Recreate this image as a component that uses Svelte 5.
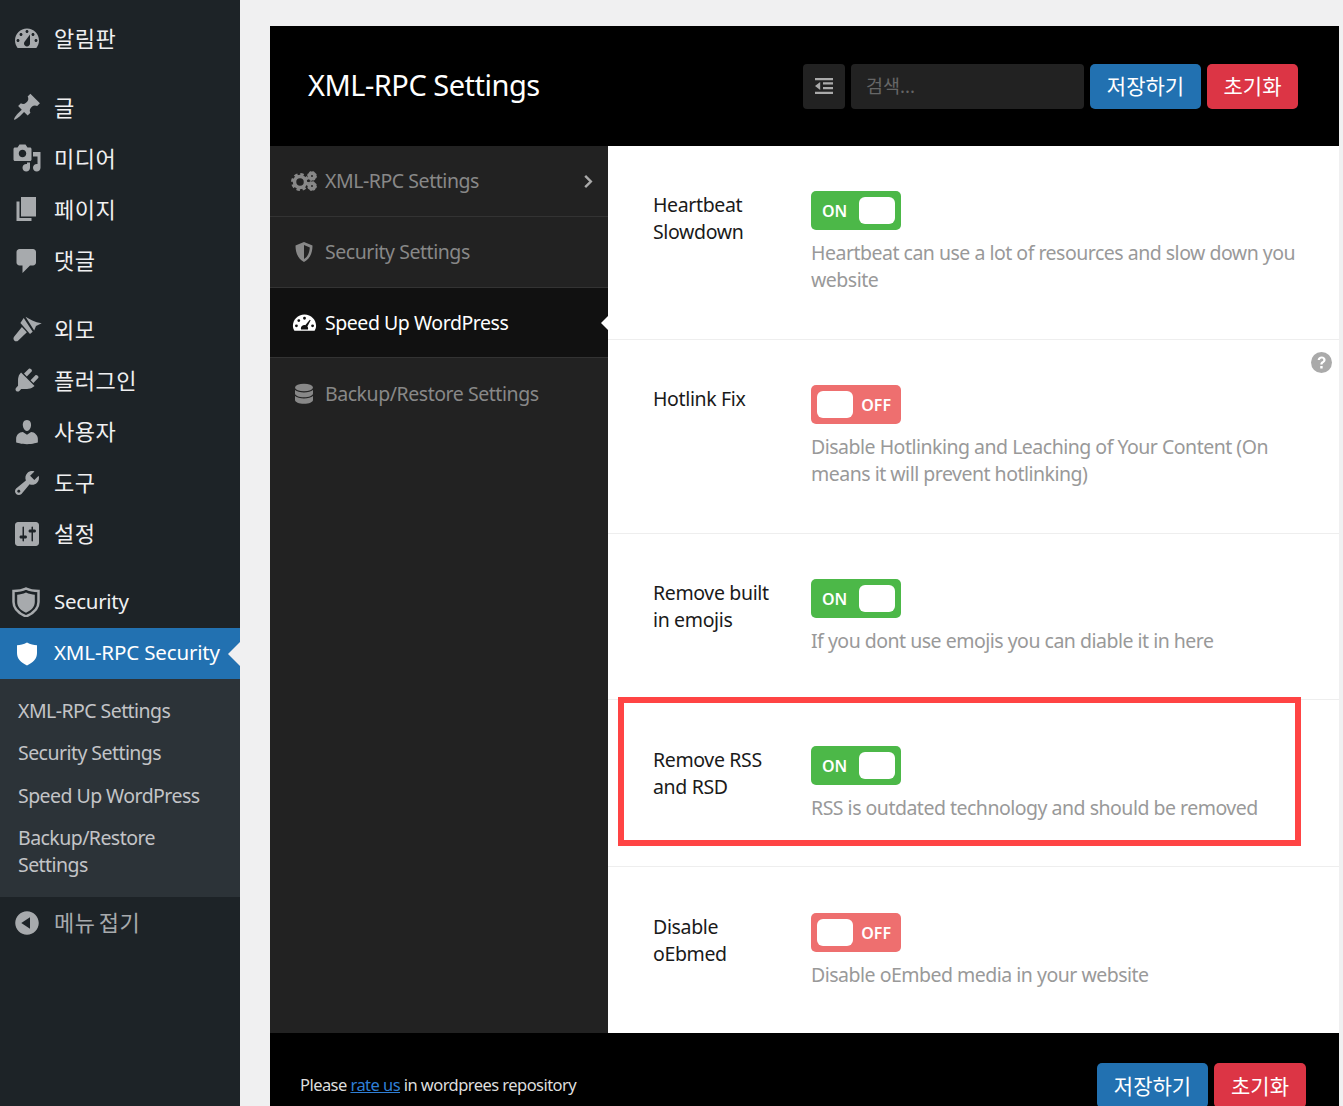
<script>
  const dash = {
    dashboard: "M3.76 16h12.48c1.1-1.37 1.76-3.11 1.76-5 0-4.42-3.58-8-8-8s-8 3.58-8 8c0 1.89.66 3.63 1.76 5zM10 4c.55 0 1 .45 1 1s-.45 1-1 1-1-.45-1-1 .45-1 1-1zM6 6c.55 0 1 .45 1 1s-.45 1-1 1-1-.45-1-1 .45-1 1-1zm8 0c.55 0 1 .45 1 1s-.45 1-1 1-1-.45-1-1 .45-1 1-1zm-5.37 5.55L12 7v6c0 1.1-.9 2-2 2s-2-.9-2-2c0-.57.24-1.08.63-1.45zM4 10c.55 0 1 .45 1 1s-.45 1-1 1-1-.45-1-1 .45-1 1-1zm12 0c.55 0 1 .45 1 1s-.45 1-1 1-1-.45-1-1 .45-1 1-1z",
    post: "M10.44 3.02l1.82-1.82 6.36 6.35-1.83 1.82c-1.05-.68-2.48-.57-3.41.36l-.75.75c-.92.93-1.04 2.35-.35 3.41l-1.83 1.82-2.41-2.41-2.8 2.79c-.42.42-3.38 2.71-3.8 2.29s1.86-3.39 2.28-3.81l2.79-2.79L4.1 9.36l1.83-1.82c1.05.69 2.48.57 3.4-.36l.75-.75c.93-.92 1.05-2.35.36-3.41z",
    media: "M13 11V4c0-.55-.45-1-1-1h-1.67L9 1H5L3.67 3H2c-.55 0-1 .45-1 1v7c0 .55.45 1 1 1h10c.55 0 1-.45 1-1zM7 4.5c1.38 0 2.5 1.12 2.5 2.5S8.38 9.5 7 9.5 4.5 8.38 4.5 7 5.62 4.5 7 4.5zM14 6h5v10.5c0 1.38-1.12 2.5-2.5 2.5S14 17.88 14 16.5s1.12-2.5 2.5-2.5c.17 0 .34.02.5.05V9h-3V6zm-4 8.05V13h2v3.5c0 1.38-1.12 2.5-2.5 2.5S7 17.88 7 16.5 8.12 14 9.5 14c.17 0 .34.02.5.05z",
    page: "M6 15V2h10v13H6zm-1 1h8v2H3V5h2v11z",
    comments: "M5 2h9c1.1 0 2 .9 2 2v7c0 1.1-.9 2-2 2h-2l-5 5v-5H5c-1.1 0-2-.9-2-2V4c0-1.1.9-2 2-2z",
    appearance: "M9 1.800C11.500 3.400 15 5.400 19.800 6.200L16 8 14.800 11zM7.800 2.600l6 9.200-1.800 1.600-6.400-7.400zM6.600 8.600l3.300 3.600-5.700 5.400c-.8.800-2 .800-2.700 0-.7-.7-.7-1.800 0-2.600z",
    plugins: "M13.11 4.36L9.87 7.6 8 5.73l3.24-3.24c.35-.34 1.05-.2 1.56.32.52.51.66 1.21.31 1.55zm-8 1.77l.91-1.12 9.01 9.01-1.19.84c-.71.71-2.63 1.16-3.82 1.16H6.14L4.9 17.26c-.59.59-1.54.59-2.12 0-.59-.58-.59-1.53 0-2.12l1.24-1.24v-3.88c0-1.13.4-3.19 1.09-3.89zm7.26 3.97l3.24-3.24c.34-.35 1.04-.21 1.55.31.52.51.66 1.21.31 1.55l-3.24 3.25z",
    users: "M10 9.25c-2.27 0-2.73-3.44-2.73-3.44C7 4.02 7.82 2 9.97 2c2.16 0 2.98 2.02 2.71 3.81 0 0-.41 3.44-2.68 3.44zm0 2.57L12.72 10c2.39 0 4.52 2.33 4.52 4.53v2.49s-3.65 1.13-7.24 1.13c-3.65 0-7.24-1.13-7.24-1.13v-2.49c0-2.25 1.94-4.48 4.47-4.48z",
    tools: "M16.68 9.77c-1.34 1.34-3.3 1.67-4.95.99l-5.41 6.52c-.99.99-2.59.99-3.58 0s-.99-2.59 0-3.57l6.52-5.42c-.68-1.65-.35-3.61.99-4.95 1.28-1.28 3.12-1.62 4.72-1.06l-2.89 2.89 2.82 2.82 2.86-2.87c.53 1.58.18 3.39-1.08 4.65zM3.81 16.21c.4.39 1.04.39 1.43 0 .4-.4.4-1.04 0-1.43-.39-.4-1.03-.4-1.43 0-.39.39-.39 1.03 0 1.43z",
    settings: "M18 16V4c0-1.1-.9-2-2-2H4c-1.1 0-2 .9-2 2v12c0 1.1.9 2 2 2h12c1.1 0 2-.9 2-2zM8 11h1c.55 0 1 .45 1 1s-.45 1-1 1H8v1.5c0 .28-.22.5-.5.5s-.5-.22-.5-.5V13H6c-.55 0-1-.45-1-1s.45-1 1-1h1V5.5c0-.28.22-.5.5-.5s.5.22.5.5V11zm5-2h-1c-.55 0-1-.45-1-1s.45-1 1-1h1V5.5c0-.28.22-.5.5-.5s.5.22.5.5V7h1c.55 0 1 .45 1 1s-.45 1-1 1h-1v5.5c0 .28-.22.5-.5.5s-.5-.22-.5-.5V9z",
    collapse: "M10 2.16c4.33 0 7.84 3.51 7.84 7.84s-3.51 7.84-7.84 7.84S2.16 14.33 2.16 10 5.71 2.16 10 2.16zm2 11.72V6.12L6.18 9.97z"
  };
  const groups = [
    [["dashboard", "알림판"]],
    [["post", "글"], ["media", "미디어"], ["page", "페이지"], ["comments", "댓글"]],
    [["appearance", "외모"], ["plugins", "플러그인"], ["users", "사용자"], ["tools", "도구"], ["settings", "설정"]]
  ];
  const subs = ["XML-RPC Settings", "Security Settings", "Speed Up WordPress", "Backup/Restore Settings"];
  const rows = [
    { label: "Heartbeat Slowdown", on: true, desc: "Heartbeat can use a lot of resources and slow down you website", h: "tall" },
    { label: "Hotlink Fix", on: false, desc: "Disable Hotlinking and Leaching of Your Content (On means it will prevent hotlinking)", h: "tall", help: true },
    { label: "Remove built in emojis", on: true, desc: "If you dont use emojis you can diable it in here", h: "short" },
    { label: "Remove RSS and RSD", on: true, desc: "RSS is outdated technology and should be removed", h: "wide", mark: true },
    { label: "Disable oEbmed", on: false, desc: "Disable oEmbed media in your website", h: "last" }
  ];
  const nav = [
    { icon: "cogs", text: "XML-RPC Settings", chevron: true },
    { icon: "shield", text: "Security Settings" },
    { icon: "gauge", text: "Speed Up WordPress", active: true },
    { icon: "db", text: "Backup/Restore Settings" }
  ];
</script>

<div class="page">
  <aside class="side">
    {#each groups as group}
      <ul class="group">
        {#each group as [icon, text]}
          <li class="item">
            <svg class="wp" viewBox="0 0 20 20"><path fill-rule="evenodd" d={dash[icon]} /></svg>
            <span class="ko">{text}</span>
          </li>
        {/each}
      </ul>
    {/each}
    <ul class="group">
      <li class="item">
        <svg class="wp" viewBox="0 0 30 30">
          <path class="sh-o" d="M14 1.500C18 3.500 23 4 26.500 4v11c0 7-5.500 11.500-12.500 14.500C7 26.500 1.500 22 1.500 15V4C5 4 10 3.500 14 1.500z" />
          <path class="sh-i" d="M14 5.500c3 1.500 6.200 2 8.800 2.200v7.300c0 5-3.800 8.500-8.800 10.700-5-2.200-8.800-5.700-8.800-10.700V7.700C7.800 7.500 11 7 14 5.500z" />
        </svg>
        <span>Security</span>
      </li>
      <li class="item current">
        <svg class="wp" viewBox="0 0 30 30">
          <path class="sh-w" d="M15 3.500c3.400 1.800 6.800 2.600 10 2.700v7.800c0 5.700-3.800 9.400-10 12.400C8.800 23.400 5 19.700 5 14V6.200C8.200 6.100 11.600 5.300 15 3.500z" />
        </svg>
        <span class="tight">XML-RPC Security</span>
      </li>
      <li class="submenu">
        {#each subs as s}<div class="subitem">{s}</div>{/each}
      </li>
    </ul>
    <div class="item collapse">
      <svg class="wp" viewBox="0 0 20 20"><path fill-rule="evenodd" d={dash.collapse} /></svg>
      <span class="ko">메뉴 접기</span>
    </div>
  </aside>

  <main class="main">
    <section class="panel">
      <header class="head">
        <h1>XML-RPC Settings</h1>
        <div class="tools">
          <button class="square" aria-label="toggle">
            <svg viewBox="0 0 20 20" width="20" height="20">
              <path d="M1 2h18v2.300H1zM9 6.300h10v2.300H9zM9 11h10v2.300H9zM1 15.700h18V18H1zM6.200 6v8L1 10z" />
            </svg>
          </button>
          <div class="search">검색...</div>
          <button class="btn blue">저장하기</button>
          <button class="btn red">초기화</button>
        </div>
      </header>

      <div class="body">
        <nav class="nav">
          {#each nav as n}
            <div class="navitem" class:active={n.active}>
              <span class="navicon">
                {#if n.icon === "cogs"}
                  <svg viewBox="0 0 26 20" width="26" height="20">
                    <circle class="gear" cx="9" cy="11" r="5.500" />
                    <circle class="teeth big" cx="9" cy="11" r="7.500" />
                    <circle class="gear" cx="21" cy="5" r="2.700" />
                    <circle class="teeth small" cx="21" cy="5" r="3.900" />
                    <circle class="gear" cx="21" cy="15" r="2.700" />
                    <circle class="teeth small" cx="21" cy="15" r="3.900" />
                  </svg>
                {:else if n.icon === "shield"}
                  <svg viewBox="0 0 20 22" width="20" height="22">
                    <path fill-rule="evenodd" d="M10 1l8.500 3.500c0 8-3 13.800-8.500 16.500C4.500 18.300 1.500 12.500 1.500 4.500zM10 4v14c3.500-2 5.500-6 5.800-11.600z" />
                  </svg>
                {:else if n.icon === "gauge"}
                  <svg viewBox="0 0 26 20" width="25" height="19">
                    <path fill-rule="evenodd" d="M13 1.500C6 1.500.8 7 .8 13.500c0 2 .5 3.400 1.400 4.800.2.300.5.400.9.400h19.800c.4 0 .7-.1.900-.4.900-1.400 1.400-2.800 1.400-4.800C25.200 7 20 1.500 13 1.500zM13 4a1.500 1.500 0 110 3 1.500 1.500 0 010-3zM7 6.500a1.500 1.500 0 110 3 1.500 1.500 0 010-3zM4.500 12a1.500 1.500 0 110 3 1.500 1.500 0 010-3zM21.500 12a1.500 1.500 0 110 3 1.500 1.500 0 010-3zM18.600 7.200l.9.500-3.500 6.600c.5.500.8 1.200.8 1.900 0 .4-.1.800-.2 1.100H9.400c-.1-.3-.2-.7-.2-1.100 0-2 1.700-3.500 3.800-3.500.3 0 .5 0 .8.100z" />
                  </svg>
                {:else}
                  <svg viewBox="0 0 20 22" width="20" height="22">
                    <ellipse cx="10" cy="4.500" rx="9" ry="3.800" />
                    <path d="M1 7v3.500c0 2.100 4 3.800 9 3.800s9-1.700 9-3.800V7c-1.800 1.600-5.200 2.500-9 2.500S2.800 8.600 1 7zM1 13v4c0 2.100 4 3.800 9 3.800s9-1.700 9-3.800v-4c-1.800 1.600-5.200 2.500-9 2.500S2.800 14.600 1 13z" />
                  </svg>
                {/if}
              </span>
              <span class="navtext">{n.text}</span>
              {#if n.chevron}
                <svg class="chev" viewBox="0 0 10 16" width="10" height="15"><path d="M2 2l6 6-6 6" /></svg>
              {/if}
            </div>
          {/each}
        </nav>

        <div class="content">
          {#each rows as r}
            <div class="row {r.h}">
              <div class="label">{r.label}</div>
              <div class="field">
                <div class="toggle" class:off={!r.on}>
                  <span class="cap">{r.on ? "ON" : "OFF"}</span>
                  <span class="knob"></span>
                </div>
                <p>{r.desc}</p>
              </div>
              {#if r.help}
                <svg class="help" viewBox="0 0 20 20" width="21" height="21">
                  <circle cx="10" cy="10" r="10" />
                  <path class="q" d="M6.300 7.600C6.600 5.500 8 4.200 10.200 4.200c2.100 0 3.700 1.300 3.700 3.200 0 1.500-.9 2.300-1.900 3-.7.500-1 .8-1 1.500H8.900c0-1.400.5-2.100 1.500-2.800.8-.6 1.300-.9 1.300-1.600 0-.8-.7-1.300-1.500-1.300-1 0-1.500.5-1.700 1.400zM8.800 13.300h2.300v2.400H8.800z" />
                </svg>
              {/if}
              {#if r.mark}<div class="mark"></div>{/if}
            </div>
          {/each}
        </div>
      </div>

      <footer class="foot">
        <div class="note">Please <a href="#rate">rate us</a> in wordprees repository</div>
        <div class="footbtns">
          <button class="btn blue">저장하기</button>
          <button class="btn red">초기화</button>
        </div>
      </footer>
    </section>
  </main>
</div>

<style>
  :global(body) {
    margin: 0;
    background: #f0f0f1;
    font-family: "Noto Sans", "Noto Sans CJK KR", sans-serif;
  }
  .page {
    display: flex;
    height: 1106px;
    overflow: hidden;
    background: #f0f0f1;
  }
  .side {
    width: 240px;
    flex: none;
    background: #1d2327;
    color: #f0f0f1;
    padding-top: 13px;
    font-size: 20.5px;
  }
  ul {
    list-style: none;
    margin: 0;
    padding: 0;
  }
  .group {
    margin-bottom: 17.300px;
  }
  .group:last-of-type {
    margin-bottom: 0;
  }
  .item {
    position: relative;
    display: flex;
    align-items: center;
    height: 51.200px;
    padding-left: 12px;
    gap: 12px;
    white-space: nowrap;
    letter-spacing: -0.3px;
  }
  .item span {
    margin-top: -3px;
  }
  .ko {
    font-size: 22px;
    letter-spacing: 0.5px;
    word-spacing: -3px;
  }
  .tight {
    letter-spacing: -0.15px;
  }
  .wp {
    width: 30px;
    height: 30px;
    flex: none;
    fill: #a7aaad;
  }
  .sh-o {
    fill: #1d2327;
    stroke: #a7aaad;
    stroke-width: 2.500;
  }
  .sh-i {
    fill: #a7aaad;
  }
  .sh-w {
    fill: #fff;
  }
  .current {
    background: #2271b1;
    color: #fff;
  }
  .current::after {
    content: "";
    position: absolute;
    right: 0;
    top: 50%;
    margin-top: -12px;
    border: 12px solid transparent;
    border-right-color: #f0f0f1;
    border-left-width: 0;
  }
  .submenu {
    background: #2c3338;
    padding: 10px 0 11px;
  }
  .subitem {
    padding: 7.500px 18px 8px;
    line-height: 27px;
    color: #c3c4c7;
    font-size: 19.5px;
    letter-spacing: -0.55px;
  }
  .collapse {
    color: #a7aaad;
  }
  .main {
    flex: 1;
    min-width: 0;
    padding: 26px 4px 0 30px;
  }
  .panel {
    display: flex;
    flex-direction: column;
  }
  .head {
    display: flex;
    align-items: center;
    justify-content: space-between;
    height: 120px;
    padding: 0 41px 0 38px;
    background: #000;
    box-sizing: border-box;
  }
  h1 {
    margin: 0 0 4px;
    color: #fff;
    font-weight: 400;
    font-size: 29px;
    letter-spacing: -0.5px;
  }
  .tools {
    display: flex;
    gap: 6px;
  }
  button {
    border: 0;
    padding: 0;
    font: inherit;
    display: block;
  }
  .square {
    width: 42px;
    height: 45px;
    border-radius: 4px;
    background: #222;
    display: grid;
    place-items: center;
  }
  .square svg {
    fill: #aaa;
  }
  .search {
    width: 233px;
    height: 45px;
    border-radius: 4px;
    background: #222;
    color: #666;
    font-size: 18.5px;
    line-height: 43px;
    padding-left: 15px;
    box-sizing: border-box;
  }
  .btn {
    height: 45px;
    border-radius: 5px;
    color: #fff;
    font-size: 21px;
    padding-bottom: 2px;
  }
  .blue {
    width: 111px;
    background: #2271b1;
  }
  .red {
    width: 91px;
    background: #dc3545;
  }
  .body {
    display: flex;
    height: 887px;
  }
  .nav {
    width: 338px;
    flex: none;
    background: #222;
  }
  .navitem {
    position: relative;
    display: flex;
    align-items: center;
    height: 71px;
    box-sizing: border-box;
    border-bottom: 1px solid #333;
    padding-left: 21px;
    color: #888;
    font-size: 19.5px;
    white-space: nowrap;
  }
  .navtext {
    letter-spacing: -0.45px;
    margin-top: -1px;
    margin-left: -1px;
  }
  .navitem:last-child {
    border-bottom: 0;
  }
  .navitem.active {
    height: 70px;
    background: #111;
    color: #fff;
  }
  .navitem.active .navtext {
    margin-top: 0;
  }
  .navitem.active::after {
    content: "";
    position: absolute;
    right: 0;
    top: 50%;
    margin-top: -7px;
    border: 7px solid transparent;
    border-right-color: #fff;
    border-left-width: 0;
  }
  .navicon {
    width: 35px;
    flex: none;
    display: flex;
    justify-content: center;
    padding-right: 9px;
    box-sizing: border-box;
  }
  .navicon svg {
    fill: currentColor;
    display: block;
  }
  .gear {
    fill: none;
    stroke: currentColor;
    stroke-width: 3.500;
  }
  .teeth {
    fill: none;
    stroke: currentColor;
    stroke-width: 3;
  }
  .teeth.big {
    stroke-dasharray: 3.300 2.600;
  }
  .teeth.small {
    stroke-width: 1.800;
    stroke-dasharray: 1.800 1.260;
  }
  .chev {
    position: absolute;
    right: 15px;
    top: 28px;
    fill: none;
    stroke: #aaa;
    stroke-width: 2.600;
  }
  .content {
    flex: 1;
    min-width: 0;
    background: #fff;
  }
  .row {
    position: relative;
    display: flex;
    box-sizing: border-box;
    padding: 45px 38px 0 45px;
    border-bottom: 1px solid #eee;
  }
  .row:last-child {
    border-bottom: 0;
  }
  .tall {
    height: 194px;
  }
  .short {
    height: 166px;
  }
  .wide {
    height: 167px;
    padding-top: 46px;
  }
  .last {
    height: 166px;
    padding-top: 46px;
  }
  .label {
    width: 158px;
    flex: none;
    padding-right: 30px;
    box-sizing: border-box;
    color: #1a1a1a;
    font-size: 19.5px;
    line-height: 27px;
    letter-spacing: -0.35px;
  }
  .field {
    flex: 1;
    min-width: 0;
  }
  .field p {
    margin: 9px 0 0;
    color: #999;
    font-size: 19.5px;
    line-height: 27px;
    letter-spacing: -0.5px;
  }
  .toggle {
    display: flex;
    align-items: center;
    justify-content: space-between;
    width: 90px;
    height: 39px;
    border-radius: 5px;
    padding: 0 6px 0 11px;
    box-sizing: border-box;
    background: #4cb848;
    color: #fff;
    font-weight: 600;
    font-size: 16px;
  }
  .toggle.off {
    flex-direction: row-reverse;
    background: #ee6f6f;
    padding: 0 10px 0 6px;
  }
  .cap {
    line-height: 1;
    margin-top: 1px;
  }
  .knob {
    width: 36px;
    height: 27px;
    border-radius: 6px;
    background: #fff;
  }
  .help {
    position: absolute;
    right: 7px;
    top: 12px;
  }
  .help circle {
    fill: #aaa;
  }
  .q {
    fill: #fff;
  }
  .mark {
    position: absolute;
    left: 10px;
    top: -3px;
    width: 683px;
    height: 149px;
    box-sizing: border-box;
    border: 6.500px solid #ff4444;
    pointer-events: none;
  }
  .foot {
    display: flex;
    justify-content: space-between;
    background: #000;
    padding: 30px 33px 0 30px;
    height: 100px;
    box-sizing: border-box;
    color: #ddd;
  }
  .note {
    font-size: 16.5px;
    line-height: 44px;
    letter-spacing: -0.55px;
  }
  .note a {
    color: #2f7fd6;
  }
  .footbtns {
    display: flex;
    gap: 6px;
  }
  .footbtns .red {
    width: 92px;
  }
</style>
